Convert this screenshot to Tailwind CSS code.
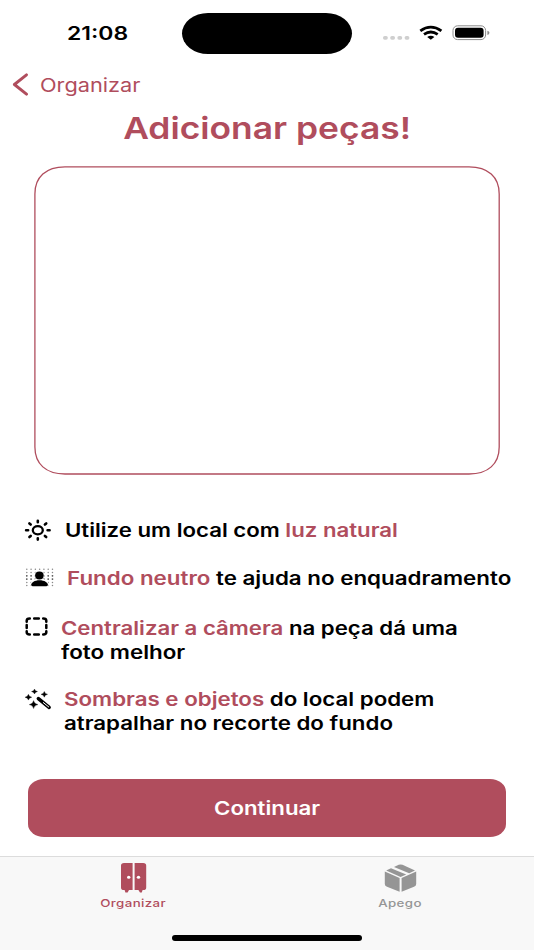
<!DOCTYPE html>
<html lang="pt-BR">
<head>
<meta charset="utf-8">
<title>Adicionar peças</title>
<script src="https://cdn.jsdelivr.net/npm/@tailwindcss/browser@4"></script>
</head>
<body class="bg-white">
<main class="w-[534px] h-[950px] overflow-hidden flex flex-col bg-white text-black font-['Inter',sans-serif]">
  <header class="h-[66px] shrink-0 flex">
    <div class="w-[182px] pt-[21px] pl-[67px] text-[18.5px] leading-[24px] font-semibold"><span class="inline-block origin-left scale-x-[1.24]">21:08</span></div>
    <div class="mt-[13px] w-[170px] h-[41px] rounded-[26px/20.5px] bg-black"></div>
    <svg class="ml-[30px] mt-[20px]" width="110" height="26" viewBox="382 20 110 26">
      <g fill="#cfcfcf"><rect x="383" y="36" width="4.8" height="3.8" rx="1.7"/><rect x="390.2" y="36" width="4.8" height="3.8" rx="1.7"/><rect x="397.4" y="36" width="4.8" height="3.8" rx="1.7"/><rect x="404.6" y="36" width="4.8" height="3.8" rx="1.7"/></g>
      <g fill="none" stroke="#000" stroke-width="2.8"><path d="M420.3 30.8Q430.8 23.4 441.4 30.8"/><path d="M424 34.3Q430.8 29.6 437.7 34.3"/></g>
      <path d="M427.2 36.9Q430.8 34.4 434.4 36.9L430.8 39.7Z"/>
      <rect x="453" y="25.8" width="32.6" height="13.8" rx="4.6" fill="none" stroke="#8c8c8c" stroke-width="1"/>
      <rect x="455" y="27.8" width="28.6" height="10" rx="3"/>
      <path d="M487.4 30.7Q489.4 31.1 489.4 32.8T487.4 34.9Z" fill="#8c8c8c"/>
    </svg>
  </header>
  <nav class="h-[36px] shrink-0 flex items-center pl-[12px] text-[#b04d5d]">
    <svg width="17" height="23" viewBox="0 0 17 23"><path d="M14.5 1.8L2.4 11.5L14.5 21.2" fill="none" stroke="currentColor" stroke-width="2.9" stroke-linecap="round" stroke-linejoin="round"/></svg>
    <span class="ml-[11px] pt-px text-[18.5px] leading-[24px] origin-left scale-x-[1.175]">Organizar</span>
  </nav>
  <h1 class="h-[52px] shrink-0 text-center text-[30.5px] leading-[52px] font-semibold text-[#b04d5d]"><span class="inline-block scale-x-[1.16]">Adicionar peças!</span></h1>
  <section class="mt-[12px] ml-[34px] w-[466px] h-[309px] shrink-0">
    <svg width="466" height="309" viewBox="0 0 466 309"><path d="M31 .9H435C454 .9 465.2 11 465.2 28V281C465.2 298 454 308 435 308H31C12 308 .9 298 .9 281V28C.9 11 12 .9 31 .9Z" fill="none" stroke="#b04d5d" stroke-width="1.3"/></svg>
  </section>
  <ul class="mt-[42px] h-[262px] shrink-0 text-[18.5px] leading-[24.5px] font-semibold whitespace-nowrap">
    <li class="flex h-[49px] pl-[24px]">
      <svg class="mt-[1px] mr-[12.5px] shrink-0" width="28" height="24" viewBox="24 518 28 24"><g fill="none" stroke="#000" stroke-linecap="round"><ellipse cx="37.8" cy="530.2" rx="5" ry="4.1" stroke-width="2.3"/><path stroke-width="2.6" d="M37.8 520.8v1.4M37.8 538.2v1.4M26.1 530.2h2M47.6 530.2h2M29.4 523.4l1.3 1.1M44.9 535.9l1.3 1.1M46.2 523.4l-1.3 1.1M30.7 535.9l-1.3 1.1"/></g></svg>
      <p class="pt-[.5px] origin-top-left scale-x-[1.2]">Utilize um local com <span class="text-[#b04d5d]">luz natural</span></p>
    </li>
    <li class="flex h-[49px] pl-[25px]">
      <svg class="mr-[12px] shrink-0" width="30" height="24" viewBox="25 566 30 24"><g stroke="#888" stroke-width="1.5" stroke-linecap="round" stroke-dasharray="0 4.28" fill="none"><path d="M26.8 569.2H53M26.8 572.5H53"/><path stroke="#555" stroke-width="1.8" d="M26.8 575.8H53M26.8 579.1H53"/><path d="M26.8 582.4H53M26.8 585.5H53"/></g><path d="M30.5 587V583Q35 578 39.5 578T48.5 583V587Z" fill="#fff"/><ellipse cx="39.4" cy="575.6" rx="5" ry="4.6" fill="#fff"/><ellipse cx="39.4" cy="575.5" rx="4.3" ry="3.9"/><path d="M31.2 584.8C31.2 582.5 34.5 580.2 39.5 580.2S47.9 582.5 47.9 584.8Q47.9 586.3 46 586.3H33Q31.2 586.3 31.2 584.8Z"/></svg>
      <p class="origin-top-left scale-x-[1.208]"><span class="text-[#b04d5d]">Fundo neutro</span> te ajuda no enquadramento</p>
    </li>
    <li class="flex h-[71px] pl-[25px]">
      <svg class="mr-[12px] shrink-0" width="24" height="24" viewBox="25 615 24 24"><g fill="none" stroke="#000" stroke-width="2.5" stroke-linecap="round"><path d="M26.7 621.7V620.8Q26.7 618.6 29.8 618.6M43.2 618.6Q46.3 618.6 46.3 620.8V621.7M46.3 631.3V632.2Q46.3 634.4 43.2 634.4M29.8 634.4Q26.7 634.4 26.7 632.2V631.3"/><path d="M34.2 618.6H38.8M34.2 634.4H38.8M26.7 625V628M46.3 625V628"/></g></svg>
      <div class="pt-[.5px]"><p class="origin-top-left scale-x-[1.2]"><span class="text-[#b04d5d]">Centralizar a câmera</span> na peça dá uma</p>
      <p class="origin-top-left scale-x-[1.21]">foto melhor</p></div>
    </li>
    <li class="flex pl-[24px]">
      <svg class="mr-[11.5px] mt-[1px] shrink-0" width="28" height="24" viewBox="24 687 28 24"><path d="M34.5 689Q35 691 37.5 691.5Q35 692 34.5 694Q34 692 31.5 691.5Q34 691 34.5 689ZM44.3 691.4Q44.8 693.7 47.6 694.3Q44.8 694.9 44.3 697.2Q43.8 694.9 41 694.3Q43.8 693.7 44.3 691.4ZM28.4 694.3Q28.9 696.7 31.8 697.2Q28.9 697.7 28.4 700.1Q27.9 697.7 25 697.2Q27.9 696.7 28.4 694.3ZM33.6 700.6Q34.3 703.9 38 704.6Q34.3 705.3 33.6 708.6Q32.9 705.3 29.2 704.6Q32.9 703.9 33.6 700.6Z" stroke="#000" stroke-width=".3"/><path d="M38.4 698.6L49.1 707.3" stroke="#000" stroke-width="3.6" stroke-linecap="round"/><path d="M43 702.3L49 707.2" stroke="#fff" stroke-width="1"/></svg>
      <div class="pt-[.5px]"><p class="origin-top-left scale-x-[1.205]"><span class="text-[#b04d5d]">Sombras e objetos</span> do local podem</p>
      <p class="origin-top-left scale-x-[1.205]">atrapalhar no recorte do fundo</p></div>
    </li>
  </ul>
  <button class="ml-[28px] w-[478px] h-[58px] shrink-0 rounded-[16px/13px] bg-[#b04d5d] text-white text-[18.5px] leading-[58px] font-semibold"><span class="inline-block scale-x-[1.202]">Continuar</span></button>
  <footer class="mt-[19px] h-[94px] shrink-0 border-t border-[#dcdcdc] bg-[#f8f8f8] flex flex-col items-center text-[11px] leading-[14px] font-medium">
    <div class="grid grid-cols-2 w-full h-[78px]">
      <div class="flex flex-col items-center text-[#b04d5d]">
        <svg class="mt-[5px]" width="27" height="32" viewBox="120 862 27 32"><path fill="currentColor" d="M124 863H132.6V890H129L127.6 892.5H125.4L124.6 890H124Q121 890 121 887.4V865.6Q121 863 124 863ZM134.6 863H143.2Q146.2 863 146.2 865.6V887.4Q146.2 890 143.2 890H142.6L141.8 892.5H140L138.4 890H134.6Z"/><ellipse cx="128.7" cy="877.2" rx="1.7" ry="1.5" fill="#fff"/><ellipse cx="138.5" cy="877.2" rx="1.7" ry="1.5" fill="#fff"/></svg>
        <span class="mt-[2px] tracking-[.3px] scale-x-[1.21]">Organizar</span>
      </div>
      <div class="flex flex-col items-center text-[#959595]">
        <svg class="mt-[5px]" width="34" height="32" viewBox="384 862 34 32"><g fill="currentColor"><path d="M384.8 871.6L399.6 878V891.7L387 886.8Q384.8 886 384.8 884Z"/><path d="M416.2 871.6L401.6 878V891.7L414 886.8Q416.2 886 416.2 884Z"/><path d="M386.2 870.4L391 868.3L406.2 874.6L400.6 877Z"/><path d="M394 867L398.7 864.8Q400.6 864 402.5 864.8L415 870.5L409.2 873.3Z"/></g></svg>
        <span class="mt-[2px] tracking-[.3px] scale-x-[1.21]">Apego</span>
      </div>
    </div>
    <div class="w-[190px] h-[6px] rounded-full bg-black"></div>
  </footer>
</main>
</body>
</html>
